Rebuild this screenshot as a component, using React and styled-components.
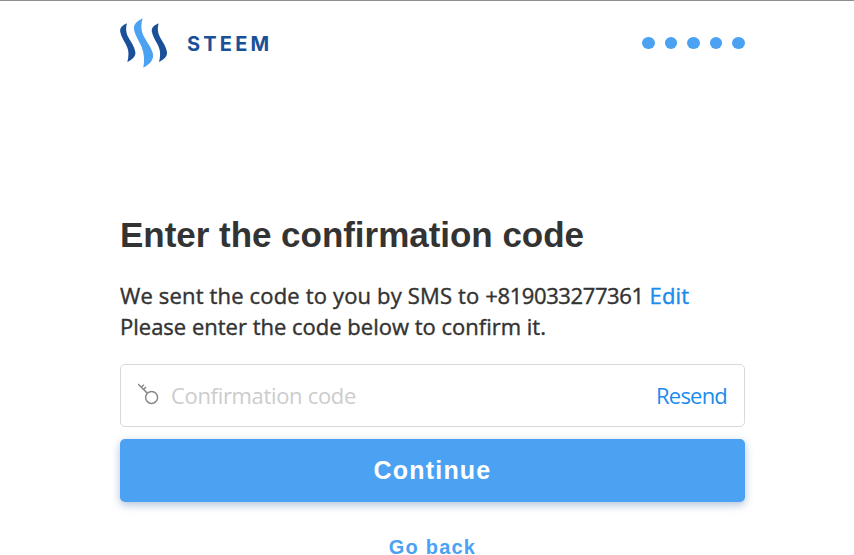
import React from 'react';
import styled, { createGlobalStyle } from 'styled-components';

const GlobalStyle = createGlobalStyle`
  * {
    box-sizing: border-box;
  }

  body {
    margin: 0;
    background-color: #fff;
  }
`;

const Page = styled.div`
  height: 555px;
  border-top: 1px solid #8e8e8e;
  color: #333;
  font-family: 'Open Sans', 'Noto Sans', sans-serif;
  font-variant-ligatures: none;
`;

const Container = styled.div`
  width: 625px;
  margin-left: 120px;
`;

const Header = styled.header`
  display: flex;
  align-items: center;
  justify-content: space-between;
  height: 84px;
`;

const Logo = styled.div`
  display: flex;
  align-items: center;
  gap: 19px;

  svg {
    display: block;
  }
`;

const LogoText = styled.span`
  padding-top: 2px;
  color: #1a5099;
  font-family: Inter, sans-serif;
  font-size: 20px;
  font-weight: 700;
  line-height: 24px;
  letter-spacing: 3.2px;
`;

const Steps = styled.div`
  display: flex;
  gap: 10px;
`;

const Step = styled.span`
  width: 12.6px;
  height: 12px;
  border-radius: 50%;
  background-color: #4ba2f2;
`;

const Title = styled.h1`
  margin: 129px 0 0;
  font-family: 'Liberation Sans', Arial, sans-serif;
  font-size: 35px;
  font-weight: 700;
  line-height: 42px;
  letter-spacing: -0.03px;
  white-space: nowrap;
`;

const Message = styled.p`
  margin: 24px 0 0;
  font-size: 22px;
  line-height: 31px;
  letter-spacing: ${props => props.$spacing || 'normal'};
  white-space: nowrap;
  -webkit-text-stroke: 0.4px currentColor;

  & + & {
    margin-top: 0;
  }
`;

const Phone = styled.span`
  letter-spacing: -0.4px;
`;

const Link = styled.a`
  color: #1a8cee;
  text-decoration: none;
`;

const Field = styled.div`
  display: flex;
  align-items: center;
  height: 63px;
  margin-top: 22px;
  padding: 0 17px;
  border: 1px solid #d9d9d9;
  border-radius: 5px;
  font-size: 22px;

  svg {
    flex: none;
    margin: -4px 12px 0 0;
  }
`;

const Input = styled.input`
  flex: 1;
  min-width: 0;
  padding: 0 0 2px;
  border: 0;
  outline: 0;
  background: none;
  font: inherit;
  letter-spacing: -0.33px;

  &::placeholder {
    color: #ccc;
    opacity: 1;
  }
`;

const Resend = styled(Link)`
  padding-bottom: 2px;
  letter-spacing: -0.8px;
`;

const Button = styled.button`
  display: block;
  width: 100%;
  height: 63px;
  margin-top: 12px;
  padding: 0;
  border: 0;
  border-radius: 5px;
  background-color: #4ba2f2;
  box-shadow: 0 3px 8px rgba(26, 80, 153, 0.35);
  color: #fff;
  font-family: 'Liberation Sans', Arial, sans-serif;
  font-size: 25px;
  font-weight: 700;
  letter-spacing: 1.2px;
`;

const BackLink = styled.a`
  display: block;
  margin-top: 37px;
  color: #4ba2f2;
  font-family: 'Liberation Sans', Arial, sans-serif;
  font-size: 20px;
  font-weight: 700;
  line-height: 16px;
  letter-spacing: 1.2px;
  text-align: center;
`;

const SteemIcon = () => (
  <svg width="48" height="50" viewBox="0 0 144 150">
    <path fill="#1a5099" d="M21 16C5 23-2 31 1 43C5 60 14 70 22 89C27 101 26 118 22 132C36 125 48 115 46 102C43 86 34 74 25 58C17 43 17 30 21 16Z" />
    <path fill="#4ba2f2" d="M68 1C49 10 38 21 43 39C47 56 58 70 65 87C73 108 74 128 70 149C88 139 102 127 99 108C95 90 81 73 71 54C62 36 63 18 68 1Z" />
    <path fill="#1a5099" d="M116 16C100 23 93 31 96 43C100 60 109 70 117 89C122 101 121 118 117 132C131 125 143 115 141 102C138 86 129 74 120 58C112 43 112 30 116 16Z" />
  </svg>
);

const KeyIcon = () => (
  <svg width="21" height="22" viewBox="0 0 21 22" fill="none" stroke="#888" strokeWidth="1.5">
    <circle cx="13.6" cy="14.4" r="6" />
    <path d="M9.3 10.1L0 1M3.2 4.2L5.8 1.8M5.5 6.5L8 4" />
  </svg>
);

const App = () => (
  <Page>
    <GlobalStyle />
    <Container>
      <Header>
        <Logo>
          <SteemIcon />
          <LogoText>STEEM</LogoText>
        </Logo>
        <Steps>
          {[1, 2, 3, 4, 5].map(step => (
            <Step key={step} />
          ))}
        </Steps>
      </Header>
      <main>
        <Title>Enter the confirmation code</Title>
        <Message $spacing="0.16px">
          We sent the code to you by SMS to <Phone>+819033277361</Phone> <Link href="#">Edit</Link>
        </Message>
        <Message>Please enter the code below to confirm it.</Message>
        <Field>
          <KeyIcon />
          <Input type="text" placeholder="Confirmation code" />
          <Resend href="#">Resend</Resend>
        </Field>
        <Button>Continue</Button>
        <BackLink>Go back</BackLink>
      </main>
    </Container>
  </Page>
);

export default App;
